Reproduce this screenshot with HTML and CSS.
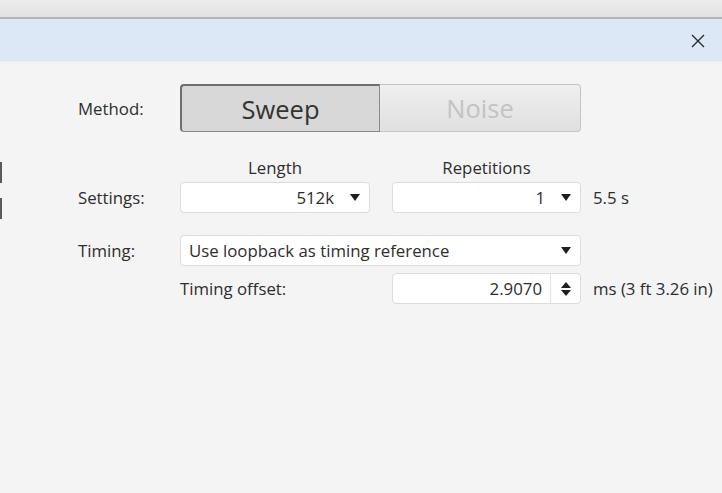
FILE: index.html
```html
<!DOCTYPE html>
<html>
<head>
<meta charset="utf-8">
<link rel="stylesheet" href="styles.css">
</head>
<body>
<div class="topstrip"></div>
<div class="band">
  <svg class="close" width="14" height="14" viewBox="0 0 14 14"><path d="M1 1 L13 13 M13 1 L1 13" stroke="#2a2a2a" stroke-width="1.4" fill="none"/></svg>
</div>
<div class="main">
  <div class="sliver">
    <div class="mark mark1"></div>
    <div class="mark mark2"></div>
  </div>
  <div class="form">
    <div class="row method-row">
      <div class="label">Method:</div>
      <div class="seg">
        <div class="seg-btn active">Sweep</div>
        <div class="seg-btn disabled">Noise</div>
      </div>
    </div>
    <div class="row head-row">
      <div class="label"></div>
      <div class="head w1">Length</div>
      <div class="gap"></div>
      <div class="head w2">Repetitions</div>
    </div>
    <div class="row field-row settings-row">
      <div class="label">Settings:</div>
      <div class="combo w1"><span class="val">512k</span><span class="arrow"></span></div>
      <div class="gap"></div>
      <div class="combo w2"><span class="val">1</span><span class="arrow"></span></div>
      <div class="after">5.5 s</div>
    </div>
    <div class="row field-row timing-row">
      <div class="label">Timing:</div>
      <div class="combo wide"><span class="val left">Use loopback as timing reference</span><span class="arrow"></span></div>
    </div>
    <div class="row field-row offset-row">
      <div class="label"></div>
      <div class="sublabel w1">Timing offset:</div>
      <div class="gap"></div>
      <div class="spin w2"><span class="val">2.9070</span><span class="spinbtn"><span class="up"></span><span class="down"></span></span></div>
      <div class="after">ms (3 ft 3.26 in)</div>
    </div>
  </div>
</div>
</body>
</html>
```
FILE: styles.css
```css
html, body {
  margin: 0;
  padding: 0;
}
body {
  background: #f4f4f4;
  font-family: "Open Sans", "Noto Sans", sans-serif;
  font-size: 16.8px;
  color: #2d2d2d;
  width: 722px;
  height: 493px;
  overflow: hidden;
}
.topstrip {
  height: 17px;
  background: linear-gradient(#ececec, #e2e2e2);
  border-bottom: 2px solid #b4b4b4;
}
.band {
  height: 42px;
  background: #dce8f5;
  display: flex;
  align-items: center;
  justify-content: flex-end;
  padding-right: 17px;
  border-bottom: 1px solid #e8eef5;
}
.close {
  display: block;
  margin-top: 1px;
}
.main {
  display: flex;
}
.sliver {
  width: 2px;
  display: flex;
  flex-direction: column;
}
.mark {
  width: 2px;
  height: 21px;
  background: #5a5a5a;
}
.mark1 { margin-top: 100px; }
.mark2 { margin-top: 15px; }
.form {
  padding-left: 76px;
  display: flex;
  flex-direction: column;
}
.row {
  display: flex;
  align-items: center;
  white-space: nowrap;
}
.label {
  width: 102px;
  flex: none;
}
.w1 { width: 190px; flex: none; box-sizing: border-box; }
.w2 { width: 189px; flex: none; box-sizing: border-box; }
.gap { width: 22px; flex: none; }
.method-row {
  margin-top: 22px;
  height: 48px;
}
.seg {
  display: flex;
  width: 401px;
  height: 48px;
}
.seg-btn {
  width: 200px;
  box-sizing: border-box;
  display: flex;
  align-items: center;
  justify-content: center;
  font-size: 25.5px;
}
.seg-btn.active {
  background: #d8d8d8;
  border: 1px solid #8a8a8a;
  border-top: 2px solid #6e6e6e;
  border-left: 2px solid #6e6e6e;
  border-radius: 4px 0 0 4px;
  color: #333;
}
.seg-btn.disabled {
  width: 201px;
  background: linear-gradient(#efefef, #e0e0e0);
  border: 1px solid #c4c4c4;
  border-left: none;
  border-radius: 0 4px 4px 0;
  color: #c3c3c3;
}
.head-row {
  margin-top: 24px;
  height: 22px;
}
.head {
  text-align: center;
}
.field-row {
  height: 31px;
}
.settings-row { margin-top: 4px; }
.timing-row { margin-top: 22px; }
.offset-row { margin-top: 7px; }
.combo, .spin {
  height: 31px;
  box-sizing: border-box;
  background: #fff;
  border: 1px solid #dcdcdc;
  border-radius: 4px;
  display: flex;
  align-items: center;
}
.combo {
  padding-right: 9px;
}
.combo .val {
  flex: 1;
  text-align: right;
  padding-right: 16px;
}
.combo .val.left {
  text-align: left;
  padding-left: 8px;
}
.combo.wide {
  width: 401px;
  flex: none;
}
.arrow {
  width: 0;
  height: 0;
  border-left: 5.5px solid transparent;
  border-right: 5.5px solid transparent;
  border-top: 7px solid #1e1e1e;
}
.after {
  margin-left: 12px;
}
.spin .val {
  flex: 1;
  text-align: right;
  padding-right: 8px;
}
.spinbtn {
  width: 29px;
  align-self: stretch;
  border-left: 1px solid #e2e2e2;
  display: flex;
  flex-direction: column;
  align-items: center;
  justify-content: center;
  gap: 2px;
}
.up {
  width: 0; height: 0;
  border-left: 5.5px solid transparent;
  border-right: 5.5px solid transparent;
  border-bottom: 6px solid #1e1e1e;
}
.down {
  width: 0; height: 0;
  border-left: 5.5px solid transparent;
  border-right: 5.5px solid transparent;
  border-top: 6px solid #1e1e1e;
}
```
